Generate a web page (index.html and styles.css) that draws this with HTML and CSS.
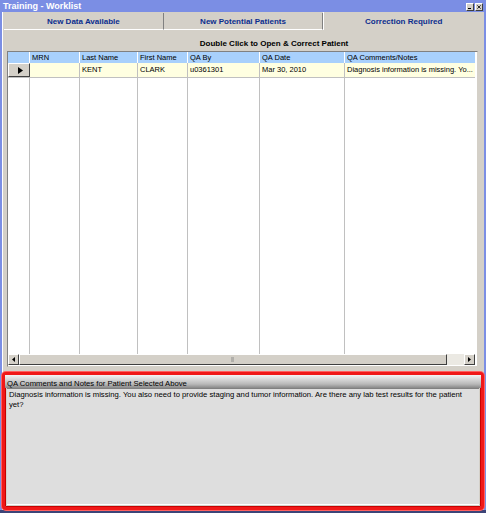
FILE: index.html
```html
<!DOCTYPE html>
<html>
<head>
<meta charset="utf-8">
<link rel="stylesheet" href="styles.css">
</head>
<body>
<div class="window">
  <div class="titlebar">
    <span class="title">Training - Worklist</span>
    <div class="tbtns">
      <span class="tbtn min"></span>
      <span class="tbtn close">
        <svg width="6" height="6" viewBox="0 0 6 6"><path d="M0.5 0.5L5.5 5.5M5.5 0.5L0.5 5.5" stroke="#000" stroke-width="1.2"/></svg>
      </span>
    </div>
  </div>
  <div class="tabs">
    <div class="tab">New Data Available</div>
    <div class="tab">New Potential Patients</div>
    <div class="tab active">Correction Required</div>
  </div>
  <div class="content">
    <div class="caption">Double Click to Open &amp; Correct Patient</div>
    <div class="grid">
      <div class="gridbody">
        <div class="row head">
          <div class="c c0"></div>
          <div class="c c1">MRN</div>
          <div class="c c2">Last Name</div>
          <div class="c c3">First Name</div>
          <div class="c c4">QA By</div>
          <div class="c c5">QA Date</div>
          <div class="c c6">QA Comments/Notes</div>
        </div>
        <div class="row data">
          <div class="c c0"><svg width="5" height="7" viewBox="0 0 5 7"><path d="M0 0L5 3.5L0 7Z" fill="#000"/></svg></div>
          <div class="c c1"></div>
          <div class="c c2">KENT</div>
          <div class="c c3">CLARK</div>
          <div class="c c4">u0361301</div>
          <div class="c c5">Mar 30, 2010</div>
          <div class="c c6">Diagnosis information is missing. Yo...</div>
        </div>
        <div class="row empty">
          <div class="c c0"></div>
          <div class="c c1"></div>
          <div class="c c2"></div>
          <div class="c c3"></div>
          <div class="c c4"></div>
          <div class="c c5"></div>
          <div class="c c6"></div>
        </div>
      </div>
      <div class="hscroll">
        <div class="sbtn"><svg width="3" height="5" viewBox="0 0 3 5"><path d="M3 0L0 2.5L3 5Z" fill="#000"/></svg></div>
        <div class="thumb"><span class="grip"></span></div>
        <div class="track"></div>
        <div class="sbtn"><svg width="3" height="5" viewBox="0 0 3 5"><path d="M0 0L3 2.5L0 5Z" fill="#000"/></svg></div>
      </div>
    </div>
    <div class="notes">
      <div class="notes-head">QA Comments and Notes for Patient Selected Above</div>
      <div class="notes-text">Diagnosis information is missing. You also need to provide staging and tumor information. Are there any lab test results for the patient yet?</div>
    </div>
  </div>
</div>
</body>
</html>
```

FILE: styles.css
```css
* { box-sizing: border-box; }
html, body { margin: 0; padding: 0; }
body {
  width: 486px;
  height: 513px;
  background: #3c4478;
  font-family: "Liberation Sans", Arial, sans-serif;
  font-size: 7.5px;
  color: #000;
  overflow: hidden;
}
.window {
  width: 486px;
  height: 510px;
  background: #7b8ee4;
  padding: 0 2px 0 2px;
  display: flex;
  flex-direction: column;
}
.titlebar {
  height: 12px;
  display: flex;
  align-items: center;
  justify-content: space-between;
  padding: 0 1px 0 1px;
}
.title {
  color: #fff;
  font-weight: bold;
  font-size: 9px;
  line-height: 11px;
}
.tbtns { display: flex; gap: 1px; padding-top: 1px; }
.tbtn {
  width: 8px;
  height: 8px;
  background: #d4d0c8;
  border: 1px solid;
  border-color: #fff #404040 #404040 #fff;
  display: flex;
  align-items: center;
  justify-content: center;
  position: relative;
}
.tbtn.min::after {
  content: "";
  position: absolute;
  left: 1px;
  bottom: 1px;
  width: 3px;
  height: 1px;
  background: #000;
}
.tbtn svg { width: 4px; height: 4px; }
.tabs {
  height: 18px;
  display: flex;
  background: #d4d0c8;
  padding: 1px 1px 0 1px;
  border-left: 1px solid #fff;
}
.tab {
  flex: 1;
  display: flex;
  align-items: center;
  justify-content: center;
  color: #0b2d8e;
  font-weight: bold;
  font-size: 8px;
  background: #d4d0c8;
  border-right: 1px solid #808080;
  border-bottom: 1px solid #fff;
}
.tab.active {
  border-left: 1px solid #fff;
  border-right: none;
  border-bottom: none;
  margin-top: -1px;
}
.content {
  flex: 1;
  background: #d4d0c8;
  border-left: 1px solid #fff;
  padding: 0 3px 0 0;
  display: flex;
  flex-direction: column;
}
.caption {
  height: 21px;
  display: flex;
  align-items: center;
  justify-content: center;
  font-weight: bold;
  font-size: 8px;
  padding-top: 5px;
  padding-left: 64px;
}
.grid {
  margin-left: 4px;
  width: 471px;
  height: 316px;
  background: #fff;
  border: 1px solid;
  border-color: #808080 #d4d0c8 #d4d0c8 #808080;
  display: flex;
  flex-direction: column;
}
.gridbody {
  flex: 1;
  display: flex;
  flex-direction: column;
  margin-right: 2px;
}
.row { display: flex; }
.c {
  border-right: 1px solid #c0c0c0;
  padding-left: 2px;
  white-space: nowrap;
  overflow: hidden;
}
.c0 { width: 22px; }
.c1 { width: 50px; }
.c2 { width: 58px; }
.c3 { width: 50px; }
.c4 { width: 72px; }
.c5 { width: 85px; }
.c6 { width: 130px; border-right: none; }
.row.head { height: 11px; background: #a8d0fc; }
.row.head .c { line-height: 11px; border-right-color: #ffffff; }
.row.head .c0 { background: #a8d0fc; }
.row.data { height: 15px; background: #ffffe1; border-bottom: 1px solid #c0c0c0; }
.row.data .c { line-height: 14px; }
.row.data .c0 {
  background: #d4d0c8;
  border: 1px solid;
  border-color: #fff #404040 #404040 #fff;
  display: flex;
  align-items: center;
  justify-content: center;
}
.row.empty { flex: 1; }
.hscroll {
  height: 11px;
  display: flex;
  margin: 0 2px 1px 0;
  background: #e8e6e0;
}
.sbtn {
  width: 11px;
  height: 11px;
  background: #d4d0c8;
  border: 1px solid;
  border-color: #fff #404040 #404040 #fff;
  display: flex;
  align-items: center;
  justify-content: center;
}
.thumb {
  width: 428px;
  background: #d4d0c8;
  border: 1px solid;
  border-color: #fff #404040 #404040 #fff;
  position: relative;
}
.grip {
  position: absolute;
  left: 211px;
  top: 2px;
  width: 3px;
  height: 5px;
  background-image: radial-gradient(#888 0.6px, transparent 0.8px);
  background-size: 2px 2px;
}
.track { flex: 1; background: #ebe9e3; }
.notes {
  margin: 5px -3px 0 -1px;
  flex: 1;
  border: 3px solid #f01818;
  border-radius: 4px;
  box-shadow: inset 0 0 0 1px #c80000, 0 0 0 1px #ff6060;
  display: flex;
  flex-direction: column;
  background: #d4d0c8;
  padding: 0 2px 2px 2px;
}
.notes-head {
  height: 13px;
  line-height: 13px;
  padding-top: 2px;
  font-size: 7.7px;
  background: linear-gradient(#f4f4f4, #b8b8b8 70%, #888 100%);
  margin: 0 -2px;
  padding-left: 2px;
}
.notes-text {
  flex: 1;
  background: #dedede;
  border-top: 1px solid #808080;
  border-bottom: 1px solid #fff;
  padding: 1px 12px 1px 2px;
  line-height: 10px;
  font-size: 7.7px;
}
```
